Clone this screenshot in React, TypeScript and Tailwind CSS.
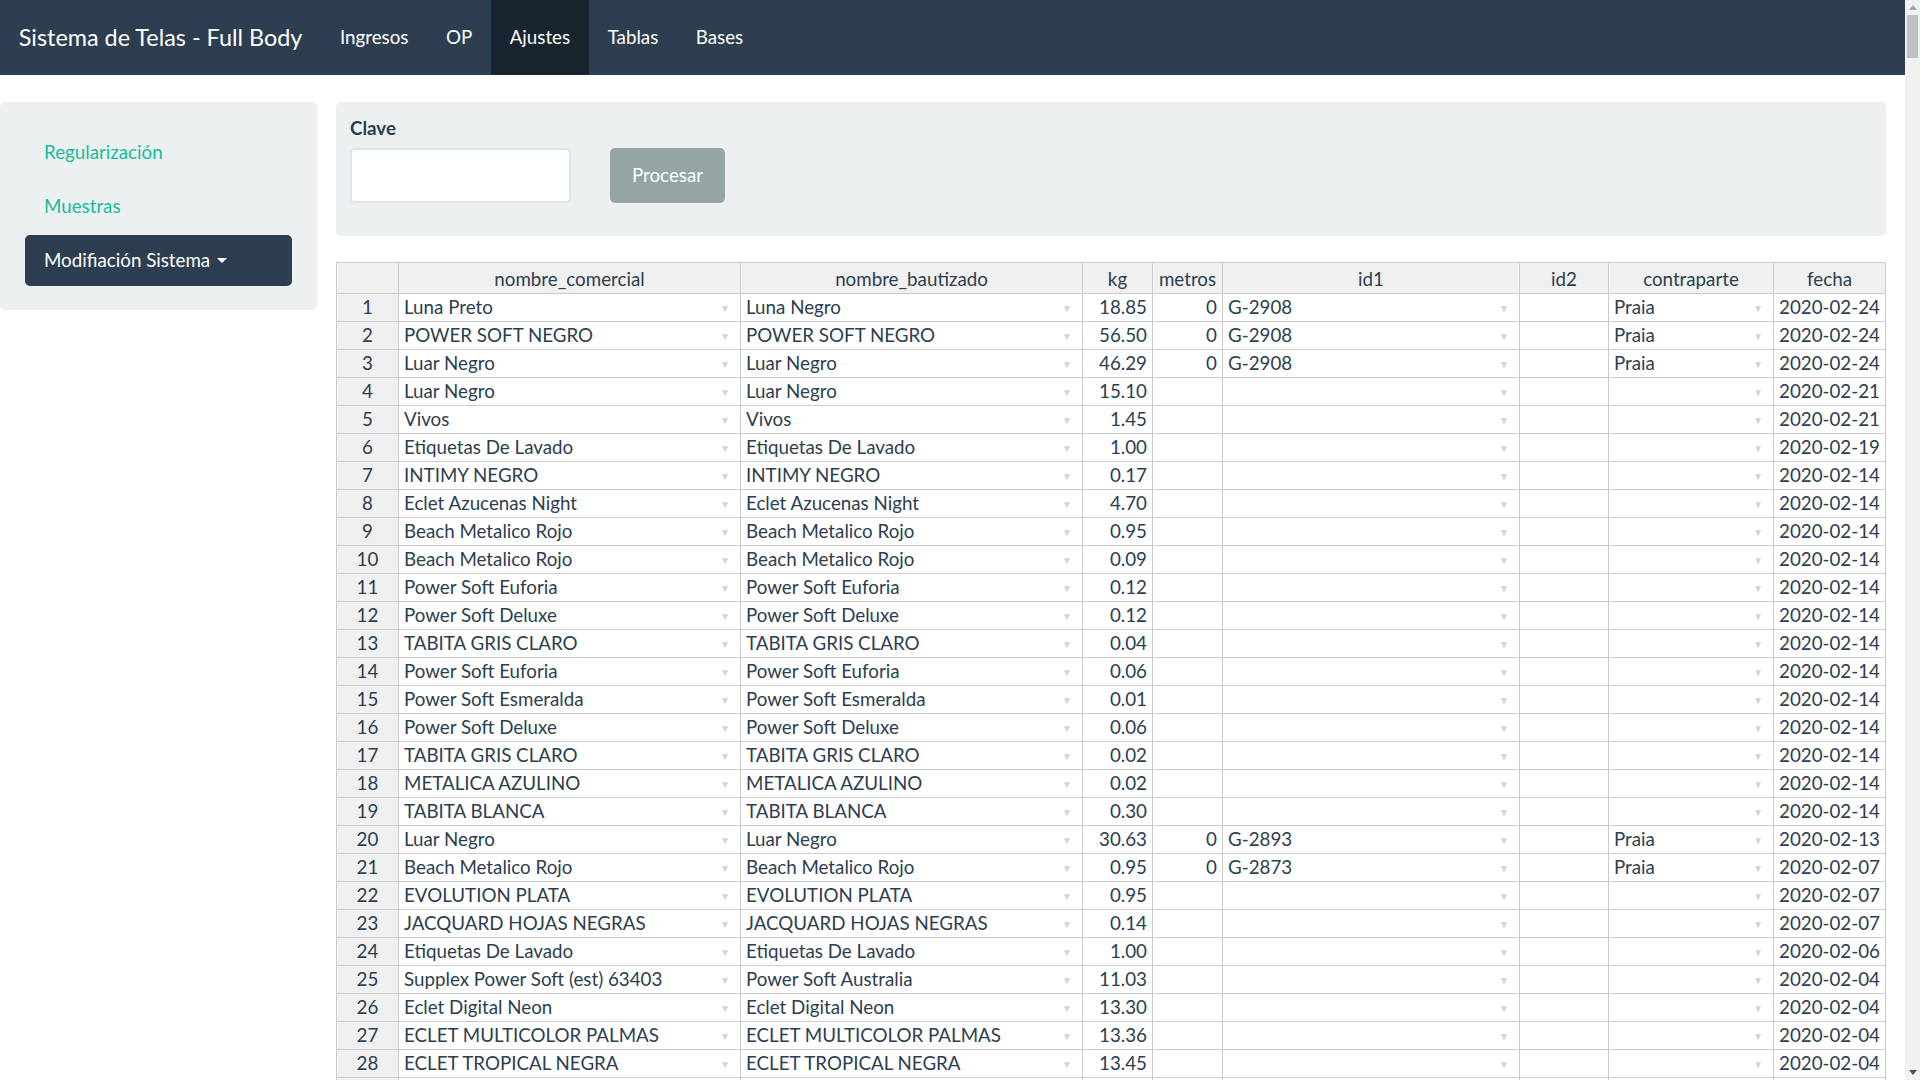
import React from "react";

type Row = {
  n: number;
  comercial?: string;
  bautizado?: string;
  kg?: string;
  metros?: string;
  id1?: string;
  contraparte?: string;
  fecha?: string;
};

const rows: Row[] = [
  { n: 1, comercial: "Luna Preto", bautizado: "Luna Negro", kg: "18.85", metros: "0", id1: "G-2908", contraparte: "Praia", fecha: "2020-02-24" },
  { n: 2, comercial: "POWER SOFT NEGRO", bautizado: "POWER SOFT NEGRO", kg: "56.50", metros: "0", id1: "G-2908", contraparte: "Praia", fecha: "2020-02-24" },
  { n: 3, comercial: "Luar Negro", bautizado: "Luar Negro", kg: "46.29", metros: "0", id1: "G-2908", contraparte: "Praia", fecha: "2020-02-24" },
  { n: 4, comercial: "Luar Negro", bautizado: "Luar Negro", kg: "15.10", fecha: "2020-02-21" },
  { n: 5, comercial: "Vivos", bautizado: "Vivos", kg: "1.45", fecha: "2020-02-21" },
  { n: 6, comercial: "Etiquetas De Lavado", bautizado: "Etiquetas De Lavado", kg: "1.00", fecha: "2020-02-19" },
  { n: 7, comercial: "INTIMY NEGRO", bautizado: "INTIMY NEGRO", kg: "0.17", fecha: "2020-02-14" },
  { n: 8, comercial: "Eclet Azucenas Night", bautizado: "Eclet Azucenas Night", kg: "4.70", fecha: "2020-02-14" },
  { n: 9, comercial: "Beach Metalico Rojo", bautizado: "Beach Metalico Rojo", kg: "0.95", fecha: "2020-02-14" },
  { n: 10, comercial: "Beach Metalico Rojo", bautizado: "Beach Metalico Rojo", kg: "0.09", fecha: "2020-02-14" },
  { n: 11, comercial: "Power Soft Euforia", bautizado: "Power Soft Euforia", kg: "0.12", fecha: "2020-02-14" },
  { n: 12, comercial: "Power Soft Deluxe", bautizado: "Power Soft Deluxe", kg: "0.12", fecha: "2020-02-14" },
  { n: 13, comercial: "TABITA GRIS CLARO", bautizado: "TABITA GRIS CLARO", kg: "0.04", fecha: "2020-02-14" },
  { n: 14, comercial: "Power Soft Euforia", bautizado: "Power Soft Euforia", kg: "0.06", fecha: "2020-02-14" },
  { n: 15, comercial: "Power Soft Esmeralda", bautizado: "Power Soft Esmeralda", kg: "0.01", fecha: "2020-02-14" },
  { n: 16, comercial: "Power Soft Deluxe", bautizado: "Power Soft Deluxe", kg: "0.06", fecha: "2020-02-14" },
  { n: 17, comercial: "TABITA GRIS CLARO", bautizado: "TABITA GRIS CLARO", kg: "0.02", fecha: "2020-02-14" },
  { n: 18, comercial: "METALICA AZULINO", bautizado: "METALICA AZULINO", kg: "0.02", fecha: "2020-02-14" },
  { n: 19, comercial: "TABITA BLANCA", bautizado: "TABITA BLANCA", kg: "0.30", fecha: "2020-02-14" },
  { n: 20, comercial: "Luar Negro", bautizado: "Luar Negro", kg: "30.63", metros: "0", id1: "G-2893", contraparte: "Praia", fecha: "2020-02-13" },
  { n: 21, comercial: "Beach Metalico Rojo", bautizado: "Beach Metalico Rojo", kg: "0.95", metros: "0", id1: "G-2873", contraparte: "Praia", fecha: "2020-02-07" },
  { n: 22, comercial: "EVOLUTION PLATA", bautizado: "EVOLUTION PLATA", kg: "0.95", fecha: "2020-02-07" },
  { n: 23, comercial: "JACQUARD HOJAS NEGRAS", bautizado: "JACQUARD HOJAS NEGRAS", kg: "0.14", fecha: "2020-02-07" },
  { n: 24, comercial: "Etiquetas De Lavado", bautizado: "Etiquetas De Lavado", kg: "1.00", fecha: "2020-02-06" },
  { n: 25, comercial: "Supplex Power Soft (est) 63403", bautizado: "Power Soft Australia", kg: "11.03", fecha: "2020-02-04" },
  { n: 26, comercial: "Eclet Digital Neon", bautizado: "Eclet Digital Neon", kg: "13.30", fecha: "2020-02-04" },
  { n: 27, comercial: "ECLET MULTICOLOR PALMAS", bautizado: "ECLET MULTICOLOR PALMAS", kg: "13.36", fecha: "2020-02-04" },
  { n: 28, comercial: "ECLET TROPICAL NEGRA", bautizado: "ECLET TROPICAL NEGRA", kg: "13.45", fecha: "2020-02-04" },
];

const headers = ["", "nombre_comercial", "nombre_bautizado", "kg", "metros", "id1", "id2", "contraparte", "fecha"];

const navItems = ["Ingresos", "OP", "Ajustes", "Tablas", "Bases"];

const cellBase = "flex h-[28px] items-center overflow-hidden whitespace-nowrap border-r border-b border-[#cccccc] bg-white pt-[1px]";

function DropCell({ text }: { text?: string }) {
  return (
    <div className={`${cellBase} pl-[5px]`}>
      <span className="flex-1 truncate">{text}</span>
      <span className="mr-[5px] w-[20px] text-center text-[10px] leading-none text-[#d4d4d4]">▼</span>
    </div>
  );
}

function NumCell({ text }: { text?: string }) {
  return <div className={`${cellBase} justify-end pr-[5px]`}>{text}</div>;
}

function TextCell({ text }: { text?: string }) {
  return <div className={`${cellBase} pl-[5px]`}>{text}</div>;
}

function Scrollbar() {
  return (
    <div className="flex h-full w-[15px] shrink-0 flex-col bg-[#f1f1f1]">
      <div className="flex h-[15px] items-center justify-center">
        <svg width="8" height="5" viewBox="0 0 8 5">
          <path d="M0 5 L4 0 L8 5 Z" fill="#a3a3a3" />
        </svg>
      </div>
      <div className="flex-1 px-[2px]">
        <div className="h-[43px] bg-[#c1c1c1]" />
      </div>
      <div className="flex h-[15px] items-center justify-center">
        <svg width="8" height="5" viewBox="0 0 8 5">
          <path d="M0 0 L8 0 L4 5 Z" fill="#505050" />
        </svg>
      </div>
    </div>
  );
}

export default function App() {
  return (
    <div className="flex h-screen w-full overflow-hidden bg-white font-['Lato','Open_Sans',sans-serif] text-[18.75px] leading-[1.42857] text-[#2c3e50]">
      <div className="h-full min-w-0 flex-1 overflow-hidden">
        <nav className="flex h-[75px] items-stretch bg-[#2c3e50] text-white">
          <div className="flex items-center px-[18.75px] text-[23.4px]">Sistema de Telas - Full Body</div>
          <ul className="flex items-stretch">
            {navItems.map((item) => (
              <li
                key={item}
                className={`flex items-center px-[18.75px] ${item === "Ajustes" ? "bg-[#1a242f]" : ""}`}
              >
                {item}
              </li>
            ))}
          </ul>
        </nav>

        <div className="flex items-start pt-[27px]">
          <aside className="w-[317px] shrink-0 rounded-[5px] bg-[#ecf0f1] px-[25px] py-[24px]">
            <ul className="flex flex-col gap-[2.5px]">
              <li className="px-[19px] py-[12.5px] text-[#18bc9c]">Regularización</li>
              <li className="px-[19px] py-[12.5px] text-[#18bc9c]">Muestras</li>
              <li className="flex items-center rounded-[5px] bg-[#2c3e50] px-[19px] py-[12.5px] text-white">
                Modifiación Sistema
                <span className="ml-[7px] inline-block h-0 w-0 border-x-[5px] border-t-[5px] border-x-transparent border-t-white" />
              </li>
            </ul>
          </aside>

          <main className="min-w-0 flex-1 px-[19px]">
            <div className="rounded-[5px] bg-[#ecf0f1] pb-[14px] pl-[14px] pt-[13px]">
              <label className="mb-[6px] block font-bold">Clave</label>
              <div className="mb-[19px] flex items-center gap-[39px]">
                <input
                  type="text"
                  className="h-[55px] w-[221px] rounded-[5px] border-2 border-[#dce4ec] bg-white px-[15px] outline-none"
                />
                <button className="h-[55px] w-[115px] rounded-[5px] bg-[#95a5a6] text-white">Procesar</button>
              </div>
            </div>

            <div className="mt-[26px] grid grid-cols-[62px_342px_342px_70px_70px_297px_89px_165px_112px] border-l border-t border-[#cccccc]">
              {headers.map((h, i) => (
                <div
                  key={i}
                  className="flex h-[31px] items-center justify-center overflow-hidden whitespace-nowrap border-r border-b border-[#cccccc] bg-[#f0f0f0] pt-[3px]"
                >
                  {h}
                </div>
              ))}
              {rows.map((r) => (
                <React.Fragment key={r.n}>
                  <div className={`${cellBase} justify-center !bg-[#f0f0f0]`}>{r.n}</div>
                  <DropCell text={r.comercial} />
                  <DropCell text={r.bautizado} />
                  <NumCell text={r.kg} />
                  <NumCell text={r.metros} />
                  <DropCell text={r.id1} />
                  <TextCell />
                  <DropCell text={r.contraparte} />
                  <TextCell text={r.fecha} />
                </React.Fragment>
              ))}
              {/* next row, cut off by the window */}
              <div className={`${cellBase} !bg-[#f0f0f0]`} />
              <div className={cellBase} />
              <div className={cellBase} />
              <div className={cellBase} />
              <div className={cellBase} />
              <div className={cellBase} />
              <div className={cellBase} />
              <div className={cellBase} />
              <div className={cellBase} />
            </div>
          </main>
        </div>
      </div>
      <Scrollbar />
    </div>
  );
}
